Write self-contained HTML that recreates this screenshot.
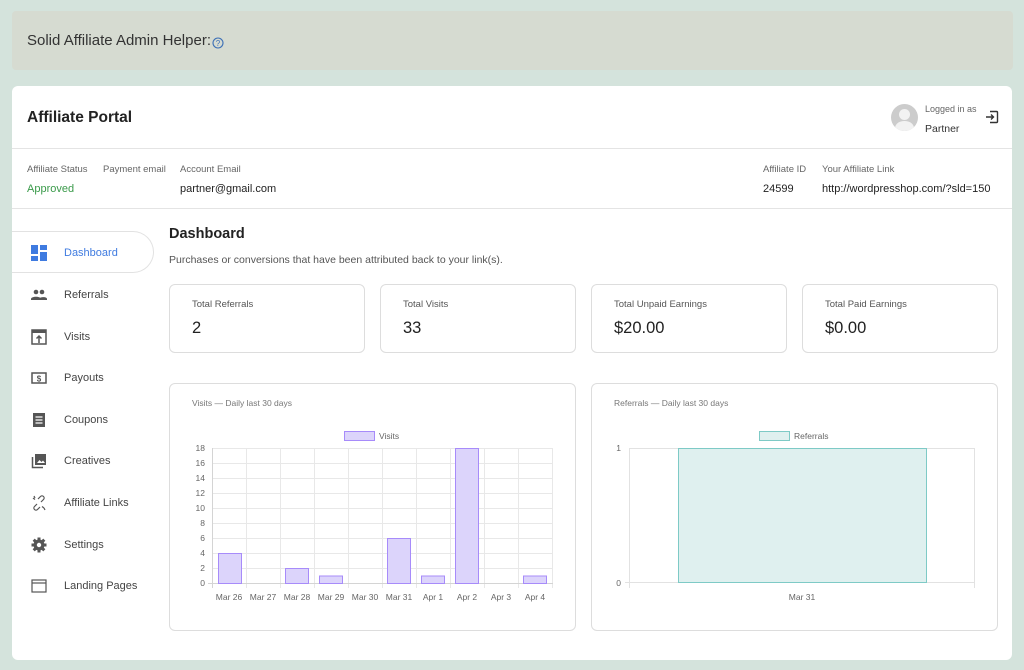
<!DOCTYPE html>
<html><head><meta charset="utf-8"><style>
*{box-sizing:border-box;margin:0;padding:0}
body{width:1024px;height:670px;background:#d4e3dc;font-family:"Liberation Sans",sans-serif;position:relative;overflow:hidden;color:#222}
.a{position:absolute;white-space:nowrap}
.banner{left:12px;top:11px;width:1001px;height:59px;background:#d6dbd1;border-radius:4px}
.card{left:12px;top:86px;width:1000px;height:574px;background:#fff;border-radius:6px}
.lbl{font-size:9.5px;color:#666}
.val{font-size:11px;color:#222}
.stat{background:#fff;border:1px solid #ddd;border-radius:6px;height:69px;top:284px;width:196px}
.stat .t{position:absolute;left:22px;top:14px;font-size:9.5px;color:#555}
.stat .v{position:absolute;left:22px;top:34px;font-size:16.5px;color:#222}
.nav{font-size:11px;color:#444;left:64px}
.ic{left:31px;width:16px;height:16px}
</style></head><body>
<div class="a banner"></div>
<div class="a" style="left:27px;top:32px;font-size:15px;color:#333">Solid Affiliate Admin Helper:</div>
<svg class="a" style="left:212px;top:37px" width="12" height="12" viewBox="0 0 12 12"><circle cx="6" cy="6" r="5" fill="none" stroke="#3b6fb6" stroke-width="1.1"/><text x="6" y="9" font-size="8" text-anchor="middle" fill="#3b6fb6" font-family="Liberation Sans">?</text></svg>
<div class="a card"></div>
<div class="a" style="left:27px;top:109px;font-size:15.5px;color:#222;font-weight:bold">Affiliate Portal</div>
<div class="a" style="left:891px;top:104px;width:27px;height:27px;border-radius:50%;background:#ccc;overflow:hidden"><div style="position:absolute;left:8px;top:5px;width:11px;height:11px;border-radius:50%;background:#f2f2f2"></div><div style="position:absolute;left:4px;top:17px;width:19px;height:14px;border-radius:50%;background:#f2f2f2"></div></div>
<div class="a" style="left:925px;top:104px;font-size:9px;color:#666">Logged in as</div>
<div class="a" style="left:925px;top:123px;font-size:10.5px;color:#333">Partner</div>
<svg class="a" style="left:985px;top:110px" width="14" height="14" viewBox="0 0 14 14"><path d="M5 1.5H11.5a1 1 0 0 1 1 1V11.5a1 1 0 0 1-1 1H5" fill="none" stroke="#333" stroke-width="1.4"/><path d="M1 7h7M6 4.5 8.5 7 6 9.5" fill="none" stroke="#333" stroke-width="1.4"/></svg>
<div class="a" style="left:12px;top:148px;width:1000px;height:1px;background:#e4e4e4"></div>
<div class="a lbl" style="left:27px;top:164px">Affiliate Status</div>
<div class="a lbl" style="left:103px;top:164px">Payment email</div>
<div class="a lbl" style="left:180px;top:164px">Account Email</div>
<div class="a lbl" style="left:763px;top:164px">Affiliate ID</div>
<div class="a lbl" style="left:822px;top:164px">Your Affiliate Link</div>
<div class="a val" style="left:27px;top:183px;color:#3a9a4a">Approved</div>
<div class="a val" style="left:180px;top:183px">partner@gmail.com</div>
<div class="a val" style="left:763px;top:183px">24599</div>
<div class="a val" style="left:822px;top:183px">http://wordpresshop.com/?sld=150</div>
<div class="a" style="left:12px;top:208px;width:1000px;height:1px;background:#e4e4e4"></div>
<div class="a" style="left:12px;top:231px;width:142px;height:42px;border:1px solid #e2e2e2;border-left:none;border-radius:0 21px 21px 0"></div>
<svg class="a ic" style="top:245px" viewBox="0 0 16 16"><rect x="0" y="0" width="7" height="9" fill="#3f7be0"/><rect x="9" y="0" width="7" height="5" fill="#3f7be0"/><rect x="0" y="11" width="7" height="5" fill="#3f7be0"/><rect x="9" y="7" width="7" height="9" fill="#3f7be0"/></svg>
<div class="a nav" style="top:247px;color:#3f7be0">Dashboard</div>
<svg class="a ic" style="top:287px" viewBox="0 0 16 16"><circle cx="5" cy="5" r="2.3" fill="#555"/><circle cx="11" cy="5" r="2.3" fill="#555"/><path d="M0 12c0-3 10-3 10 0v1H0zM8 12c0-2 8-3 8 0v1H8z" fill="#555"/></svg>
<div class="a nav" style="top:289px">Referrals</div>
<svg class="a ic" style="top:329px" viewBox="0 0 16 16"><rect x="1" y="1" width="14" height="14" fill="none" stroke="#555" stroke-width="1.5"/><rect x="1" y="1" width="14" height="3" fill="#555"/><path d="M8 14V7M5.5 9.5 8 7l2.5 2.5" fill="none" stroke="#555" stroke-width="1.5"/></svg>
<div class="a nav" style="top:331px">Visits</div>
<svg class="a ic" style="top:370px" viewBox="0 0 16 16"><rect x="1" y="3" width="14" height="10" fill="none" stroke="#555" stroke-width="1.5"/><text x="8" y="11.5" font-size="8" text-anchor="middle" fill="#555" font-family="Liberation Sans" font-weight="bold">$</text></svg>
<div class="a nav" style="top:372px">Payouts</div>
<svg class="a ic" style="top:412px" viewBox="0 0 16 16"><rect x="2" y="1" width="12" height="14" fill="#555"/><path d="M4.5 5h7M4.5 8h7M4.5 11h7" stroke="#fff" stroke-width="1.2"/></svg>
<div class="a nav" style="top:414px">Coupons</div>
<svg class="a ic" style="top:453px" viewBox="0 0 16 16"><rect x="4" y="1" width="11" height="11" fill="#555"/><path d="M6 10l2.5-3 2 2 1.5-1.5L14 10z" fill="#fff"/><path d="M1.5 4v10.5H12" fill="none" stroke="#555" stroke-width="1.5"/></svg>
<div class="a nav" style="top:455px">Creatives</div>
<svg class="a ic" style="top:495px" viewBox="0 0 16 16"><path d="M6 9 3.5 11.5a2 2 0 0 0 3 3L9 12M10 7l2.5-2.5a2 2 0 0 0-3-3L7 4M2 3l2 1.5M3 1l1 2M13 13l-2-1.5M14 15l-1-2" fill="none" stroke="#555" stroke-width="1.2"/></svg>
<div class="a nav" style="top:497px">Affiliate Links</div>
<svg class="a ic" style="top:537px" viewBox="0 0 16 16"><circle cx="8" cy="8" r="5.5" fill="#555"/><g stroke="#555" stroke-width="3"><path d="M8 0.5v3M8 12.5v3M0.5 8h3M12.5 8h3M2.7 2.7l2.1 2.1M11.2 11.2l2.1 2.1M2.7 13.3l2.1-2.1M11.2 4.8l2.1-2.1"/></g><circle cx="8" cy="8" r="2.2" fill="#fff"/></svg>
<div class="a nav" style="top:539px">Settings</div>
<svg class="a ic" style="top:578px" viewBox="0 0 16 16"><rect x="1" y="2" width="14" height="12" fill="none" stroke="#555" stroke-width="1.2"/><path d="M1 5h14" stroke="#555" stroke-width="1.2"/></svg>
<div class="a nav" style="top:580px">Landing Pages</div>
<div class="a" style="left:169px;top:226px;font-size:14.5px;color:#222;font-weight:bold">Dashboard</div>
<div class="a" style="left:169px;top:254px;font-size:10.5px;color:#555">Purchases or conversions that have been attributed back to your link(s).</div>
<div class="a stat" style="left:169px"><div class="t">Total Referrals</div><div class="v">2</div></div>
<div class="a stat" style="left:380px"><div class="t">Total Visits</div><div class="v">33</div></div>
<div class="a stat" style="left:591px"><div class="t">Total Unpaid Earnings</div><div class="v">$20.00</div></div>
<div class="a stat" style="left:802px"><div class="t">Total Paid Earnings</div><div class="v">$0.00</div></div>
<div class="a" style="left:169px;top:383px;width:407px;height:248px;border:1px solid #ddd;border-radius:6px"></div>
<div class="a" style="left:591px;top:383px;width:407px;height:248px;border:1px solid #ddd;border-radius:6px"></div>
<svg class="a" style="left:0;top:0" width="1024" height="670" font-family="Liberation Sans" font-size="8.5" fill="#666">
<text x="192" y="406" font-size="8.5" fill="#777">Visits — Daily last 30 days</text>
<text x="614" y="406" font-size="8.5" fill="#777">Referrals — Daily last 30 days</text>
<rect x="344.5" y="431.5" width="30" height="9" fill="#dcd4fb" stroke="#a78bfa"/>
<text x="379" y="439">Visits</text>
<g stroke="#e8e8e8" stroke-width="1">
<path d="M212 448.5H553M212 463.5H553M212 478.5H553M212 493.5H553M212 508.5H553M212 523.5H553M212 538.5H553M212 553.5H553M212 568.5H553"/>
<path d="M246.5 448V588M280.5 448V588M314.5 448V588M348.5 448V588M382.5 448V588M416.5 448V588M450.5 448V588M484.5 448V588M518.5 448V588M552.5 448V588"/>
</g>
<path d="M212.5 448V588M208 583.5H553" stroke="#d4d4d4"/>
<g fill="#dcd4fb" stroke="#a78bfa">
<rect x="218.5" y="553.5" width="23" height="30"/>
<rect x="285.5" y="568.5" width="23" height="15"/>
<rect x="319.5" y="576" width="23" height="7.5"/>
<rect x="387.5" y="538.5" width="23" height="45"/>
<rect x="421.5" y="576" width="23" height="7.5"/>
<rect x="455.5" y="448.5" width="23" height="135"/>
<rect x="523.5" y="576" width="23" height="7.5"/>
</g>
<g text-anchor="end">
<text x="205" y="451">18</text><text x="205" y="466">16</text><text x="205" y="481">14</text><text x="205" y="496">12</text><text x="205" y="511">10</text><text x="205" y="526">8</text><text x="205" y="541">6</text><text x="205" y="556">4</text><text x="205" y="571">2</text><text x="205" y="586">0</text>
</g>
<g text-anchor="middle">
<text x="229" y="600">Mar 26</text><text x="263" y="600">Mar 27</text><text x="297" y="600">Mar 28</text><text x="331" y="600">Mar 29</text><text x="365" y="600">Mar 30</text><text x="399" y="600">Mar 31</text><text x="433" y="600">Apr 1</text><text x="467" y="600">Apr 2</text><text x="501" y="600">Apr 3</text><text x="535" y="600">Apr 4</text>
</g>
<rect x="759.5" y="431.5" width="30" height="9" fill="#dff0ef" stroke="#7ecac6"/>
<text x="794" y="439">Referrals</text>
<path d="M629 448.5H975M629.5 448V588M974.5 448V588M625 582.5H975" stroke="#e2e2e2"/>
<rect x="678.5" y="448.5" width="248" height="134" fill="#dff0ef" stroke="#7ecac6"/>
<text x="621" y="451" text-anchor="end">1</text><text x="621" y="586" text-anchor="end">0</text>
<text x="802" y="600" text-anchor="middle">Mar 31</text>
</svg>
</body></html>
